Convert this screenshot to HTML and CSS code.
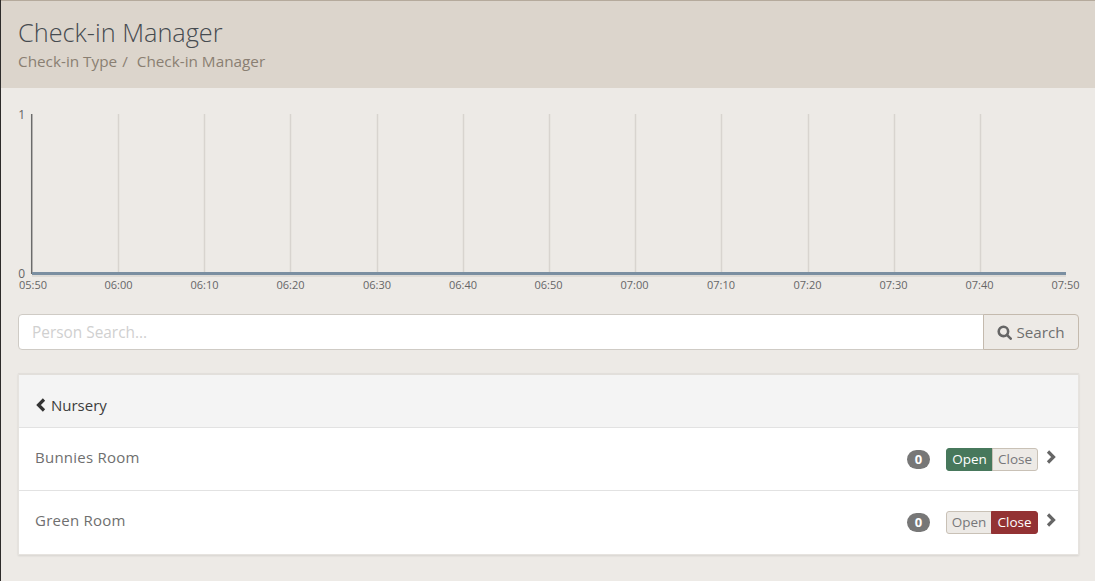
FILE: index.html
```html
<!DOCTYPE html>
<html lang="en">
<head>
<meta charset="utf-8">
<title>Check-in Manager</title>
<link rel="stylesheet" href="styles.css">
</head>
<body>
<div class="page">
  <header class="page-header">
    <h1 class="page-title">Check-in Manager</h1>
    <div class="breadcrumb"><span>Check-in Type</span><span class="sep">/</span><span>Check-in Manager</span></div>
  </header>
  <main class="content">
    <svg class="chart" width="1077" height="209" viewBox="0 0 1077 209">
      <g class="grid">
        <line x1="100.5" y1="26" x2="100.5" y2="185"/>
        <line x1="186.5" y1="26" x2="186.5" y2="185"/>
        <line x1="272.5" y1="26" x2="272.5" y2="185"/>
        <line x1="359.5" y1="26" x2="359.5" y2="185"/>
        <line x1="445.5" y1="26" x2="445.5" y2="185"/>
        <line x1="531.5" y1="26" x2="531.5" y2="185"/>
        <line x1="617.5" y1="26" x2="617.5" y2="185"/>
        <line x1="703.5" y1="26" x2="703.5" y2="185"/>
        <line x1="790.5" y1="26" x2="790.5" y2="185"/>
        <line x1="876.5" y1="26" x2="876.5" y2="185"/>
        <line x1="962.5" y1="26" x2="962.5" y2="185"/>
      </g>
      <line class="axis" x1="13.7" y1="26" x2="13.7" y2="186"/>
      <line class="shadow" x1="14" y1="188" x2="1048" y2="188"/>
      <line class="series" x1="14" y1="185.5" x2="1048" y2="185.5"/>
      <g class="labels">
        <text class="y-label" x="7" y="31" text-anchor="end">1</text>
        <text class="y-label" x="7" y="190" text-anchor="end">0</text>
        <text x="15" y="201" text-anchor="middle">05:50</text>
        <text x="100.5" y="201" text-anchor="middle">06:00</text>
        <text x="186.5" y="201" text-anchor="middle">06:10</text>
        <text x="272.5" y="201" text-anchor="middle">06:20</text>
        <text x="359" y="201" text-anchor="middle">06:30</text>
        <text x="445" y="201" text-anchor="middle">06:40</text>
        <text x="530.5" y="201" text-anchor="middle">06:50</text>
        <text x="616.5" y="201" text-anchor="middle">07:00</text>
        <text x="703" y="201" text-anchor="middle">07:10</text>
        <text x="789.5" y="201" text-anchor="middle">07:20</text>
        <text x="875.5" y="201" text-anchor="middle">07:30</text>
        <text x="961.5" y="201" text-anchor="middle">07:40</text>
        <text x="1047.5" y="201" text-anchor="middle">07:50</text>
      </g>
    </svg>
    <form class="search">
      <input class="search-input" type="text" placeholder="Person Search...">
      <button class="search-btn" type="button">
        <svg class="search-icon" width="15" height="15" viewBox="0 0 14 14"><circle cx="6" cy="6" r="4.4"/><line x1="9.2" y1="9.2" x2="12.8" y2="12.8"/></svg>
        Search
      </button>
    </form>
    <section class="panel">
      <div class="panel-head">
        <svg class="chev chev-dark" width="10" height="14" viewBox="0 0 10 14"><path d="M8 1.5 L2.5 7 L8 12.5"/></svg>
        <span>Nursery</span>
      </div>
      <div class="row">
        <span class="row-name">Bunnies Room</span>
        <span class="count">0</span>
        <div class="toggle">
          <span class="tg tg-open-on">Open</span><span class="tg tg-off">Close</span>
        </div>
        <svg class="chev chev-row" width="10" height="14" viewBox="0 0 10 14"><path d="M2 1.5 L7.5 7 L2 12.5"/></svg>
      </div>
      <div class="row">
        <span class="row-name">Green Room</span>
        <span class="count">0</span>
        <div class="toggle">
          <span class="tg tg-off">Open</span><span class="tg tg-close-on">Close</span>
        </div>
        <svg class="chev chev-row" width="10" height="14" viewBox="0 0 10 14"><path d="M2 1.5 L7.5 7 L2 12.5"/></svg>
      </div>
    </section>
  </main>
</div>
</body>
</html>
```
FILE: styles.css
```css
* { box-sizing: border-box; }
html, body { margin: 0; height: 100%; }
body {
  background: #edeae6;
  font-family: "Open Sans", sans-serif;
  color: #6a6a6a;
  overflow: hidden;
}
.page { min-height: 581px; border-left: 1px solid #2d2b2a; }
.page-header {
  height: 88px;
  background: #dcd5cc;
  border-top: 1px solid #b5aa9c;
  padding: 14px 17px 0;
}
.page-title {
  margin: 0;
  font-size: 25.3px;
  font-weight: 300;
  line-height: 34px;
  color: #464b50;
}
.breadcrumb {
  margin-top: 2px;
  font-size: 15.3px;
  line-height: 20px;
  color: #8a7f72;
}
.breadcrumb .sep { margin: 0 9px 0 5px; }
.content { padding: 0 16px 0 17px; }
.chart { display: block; margin-top: 0; }
.grid line { stroke: #d8d4cf; stroke-width: 1.5; }
.axis { stroke: #6b6b6b; stroke-width: 1.5; }
.shadow { stroke: #dedbd6; stroke-width: 2; }
.series { stroke: #7b8fa1; stroke-width: 3; }
.labels text { font-family: "Open Sans", sans-serif; font-size: 11px; fill: #666; }
.labels .y-label { font-size: 12px; }
.search { display: flex; height: 36px; margin-top: 17px; }
.search-input {
  flex: 1;
  min-width: 0;
  height: 36px;
  padding: 0 13px;
  border: 1px solid #cfcbc5;
  border-radius: 4px 0 0 4px;
  background: #fff;
  font: 15.4px "Open Sans", sans-serif;
  outline: none;
}
.search-input::placeholder { color: #d0d0d0; opacity: 1; }
.search-btn {
  width: 96px;
  height: 36px;
  margin-left: -1px;
  padding: 0;
  display: flex;
  align-items: center;
  justify-content: center;
  gap: 4px;
  border: 1px solid #c4baae;
  border-radius: 0 4px 4px 0;
  background: #edeae6;
  font: 15.2px "Open Sans", sans-serif;
  color: #6f6f6f;
}
.search-icon { fill: none; stroke: #666; stroke-width: 2.4; stroke-linecap: round; }
.panel {
  margin-top: 23px;
  background: #fff;
  border: 1px solid #e6e3df;
  border-top: 2px solid #e2dfdb;
  box-shadow: 0 1px 2px rgba(0, 0, 0, 0.1);
}
.panel-head {
  height: 53px;
  display: flex;
  align-items: center;
  gap: 5px;
  padding: 8px 17px 0;
  background: #f4f4f4;
  border-bottom: 1px solid #e2e2e2;
  font-size: 15px;
  color: #3c3c3c;
}
.chev { fill: none; stroke: #666; stroke-width: 3.2; }
.chev-dark { stroke: #333; }
.chev-row { margin-top: -2px; }
.row {
  height: 63px;
  display: flex;
  align-items: center;
  padding: 0 22px 3px 16px;
  border-bottom: 1px solid #e2e2e2;
  font-size: 15px;
  color: #6f6f6f;
}
.row:last-child { border-bottom: 0; }
.row-name { flex: 1; letter-spacing: 0.25px; margin-bottom: 2px; }
.count {
  width: 23px;
  height: 19px;
  margin-right: 16px;
  margin-top: 3px;
  border-radius: 10px;
  background: #777;
  color: #fff;
  font-size: 13px;
  font-weight: 700;
  line-height: 19px;
  text-align: center;
}
.toggle {
  display: flex;
  height: 23px;
  margin-top: 3px;
  margin-right: 8px;
  font-size: 13.5px;
  line-height: 21px;
}
.tg { display: block; border: 1px solid #c9c1b6; text-align: center; }
.tg:first-child { border-radius: 3px 0 0 3px; }
.tg:last-child { border-radius: 0 3px 3px 0; margin-left: -1px; }
.tg-off { background: #edeae6; color: #77777a; width: 46px; }
.tg-open-on { background: #47785c; border-color: #47785c; color: #fff; width: 47px; }
.tg-close-on { background: #933234; border-color: #933234; color: #fff; width: 47px; }
```
